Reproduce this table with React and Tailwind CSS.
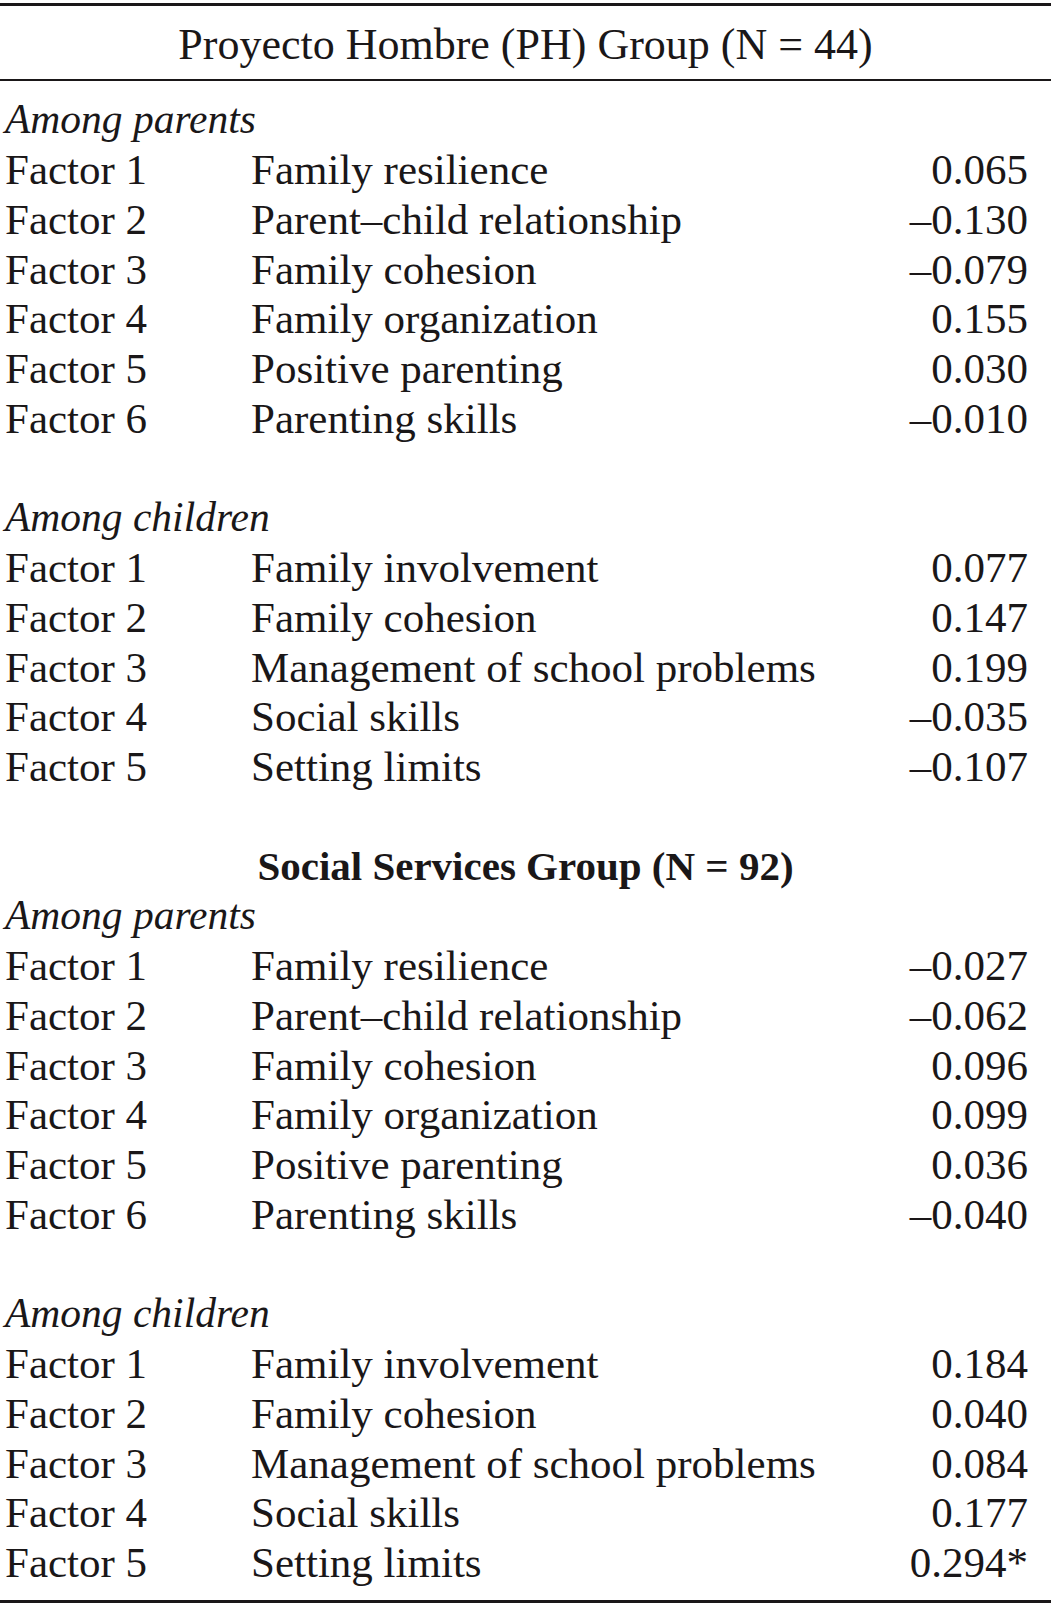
import React from "react"

const groups = [
  {
    title: "Proyecto Hombre (PH) Group (N = 44)",
    parents: [
      ["Family resilience", "0.065"],
      ["Parent–child relationship", "–0.130"],
      ["Family cohesion", "–0.079"],
      ["Family organization", "0.155"],
      ["Positive parenting", "0.030"],
      ["Parenting skills", "–0.010"],
    ],
    children: [
      ["Family involvement", "0.077"],
      ["Family cohesion", "0.147"],
      ["Management of school problems", "0.199"],
      ["Social skills", "–0.035"],
      ["Setting limits", "–0.107"],
    ],
  },
  {
    title: "Social Services Group (N = 92)",
    parents: [
      ["Family resilience", "–0.027"],
      ["Parent–child relationship", "–0.062"],
      ["Family cohesion", "0.096"],
      ["Family organization", "0.099"],
      ["Positive parenting", "0.036"],
      ["Parenting skills", "–0.040"],
    ],
    children: [
      ["Family involvement", "0.184"],
      ["Family cohesion", "0.040"],
      ["Management of school problems", "0.084"],
      ["Social skills", "0.177"],
      ["Setting limits", "0.294*"],
    ],
  },
]

function Row({ factor, label, value }) {
  return (
    <div className="flex h-[49.75px] items-center pl-[5px] pr-[23px] whitespace-nowrap">
      <span className="w-[246px]">Factor {factor}</span>
      <span className="flex-1">{label}</span>
      <span className="text-right">{value}</span>
    </div>
  )
}

function Subhead({ children }) {
  return (
    <div className="flex h-[49.75px] items-center pl-[5px] italic text-[41.5px]">{children}</div>
  )
}

function Block({ rows }) {
  return rows.map(([label, value], i) => (
    <Row key={i} factor={i + 1} label={label} value={value} />
  ))
}

export default function App() {
  const [ph, ss] = groups

  return (
    <div className="w-[1051px] min-h-[1608px] bg-white pt-[3px] font-['Liberation_Serif',serif] text-[43px] text-[#1a1718] leading-none">
      <div className="border-t-[3px] border-[#1a1718]" />
      <div className="flex h-[73px] items-center justify-center pt-[5px] text-[44px]">{ph.title}</div>
      <div className="border-t-[2px] border-[#1a1718]" />

      <div className="pt-[14px]">
        <Subhead>Among parents</Subhead>
        <Block rows={ph.parents} />
        <div className="h-[49.75px]" />
        <Subhead>Among children</Subhead>
        <Block rows={ph.children} />
        <div className="h-[49.75px]" />

        <div className="flex h-[49.75px] items-center justify-center font-bold text-[41px]">
          {ss.title}
        </div>
        <Subhead>Among parents</Subhead>
        <Block rows={ss.parents} />
        <div className="h-[49.75px]" />
        <Subhead>Among children</Subhead>
        <Block rows={ss.children} />
      </div>

      <div className="mt-[12px] border-t-[3px] border-[#1a1718]" />
    </div>
  )
}
